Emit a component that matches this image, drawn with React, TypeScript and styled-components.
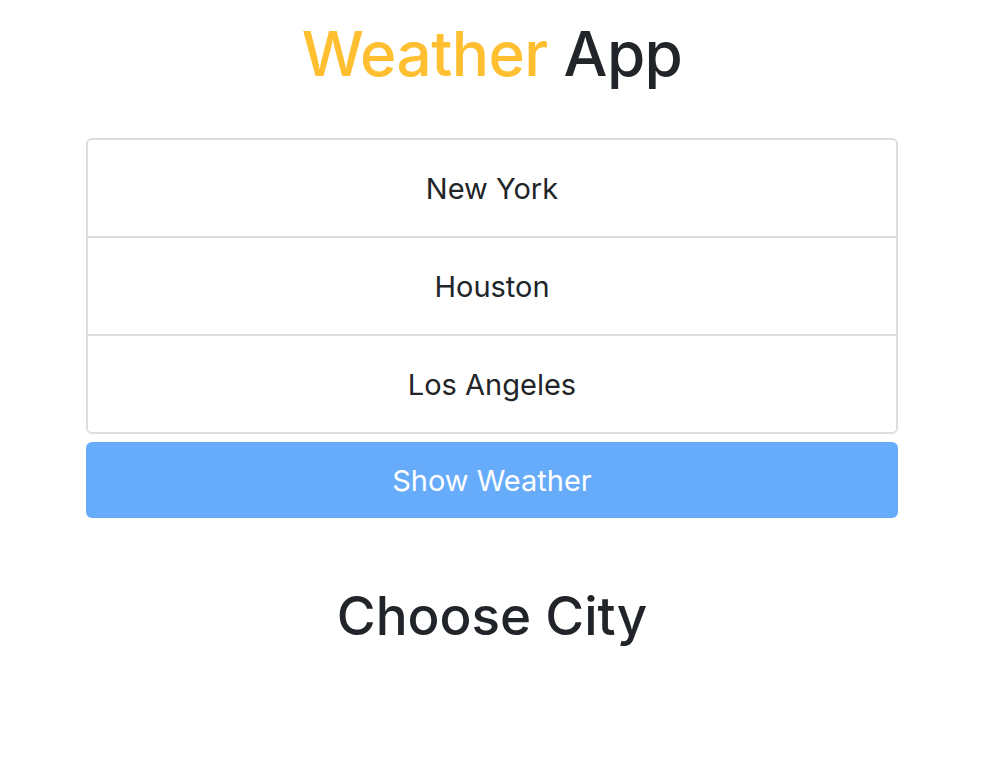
import React from "react";
import styled, { createGlobalStyle } from "styled-components";

const Global = createGlobalStyle`
  html, body { margin: 0; padding: 0; background: #fff; }
  body { font-family: Inter, "Noto Sans", sans-serif; color: #212529; }
`;

const Page = styled.div`
  margin: 0 88px 0 86px;
  padding-top: 17px;
  display: flex;
  flex-direction: column;
  align-items: stretch;
`;

const Title = styled.h1`
  margin: 0 0 47px;
  font-size: 62px;
  font-weight: 500;
  line-height: 74px;
  text-align: center;
  letter-spacing: -0.6px;
`;

const Accent = styled.span`
  color: #ffbf30;
`;

const List = styled.ul`
  list-style: none;
  margin: 0;
  padding: 0;
  border: 2px solid #dedede;
  border-radius: 6px;
  overflow: hidden;
`;

const Item = styled.li`
  height: 96px;
  display: flex;
  align-items: center;
  justify-content: center;
  font-size: 29px;
  font-weight: 400;
  & + & { border-top: 2px solid #dedede; }
`;

const Button = styled.button`
  margin-top: 8px;
  height: 76px;
  border: none;
  border-radius: 6px;
  background: #66acfb;
  color: #fff;
  font-family: inherit;
  font-size: 29px;
  font-weight: 400;
  cursor: pointer;
`;

const Heading = styled.h2`
  margin: 63px 0 0;
  text-align: center;
  font-size: 53px;
  font-weight: 500;
  line-height: 70px;
`;

export default function App() {
  const cities = ["New York", "Houston", "Los Angeles"];
  return (
    <>
      <Global />
      <Page>
        <Title>
          <Accent>Weather</Accent> App
        </Title>
        <List>
          {cities.map((c) => (
            <Item key={c}>{c}</Item>
          ))}
        </List>
        <Button>Show Weather</Button>
        <Heading>Choose City</Heading>
      </Page>
    </>
  );
}
